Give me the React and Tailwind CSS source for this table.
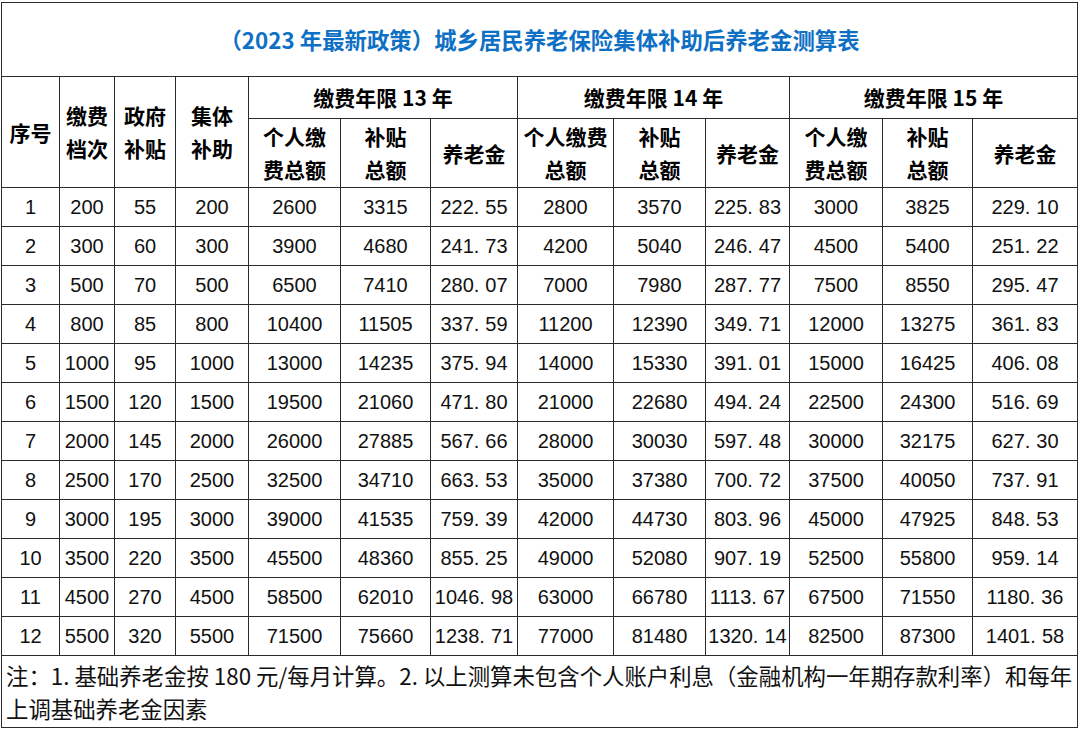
import React from 'react';

const rows = [
  [1, 200, 55, 200, 2600, 3315, '222.55', 2800, 3570, '225.83', 3000, 3825, '229.10'],
  [2, 300, 60, 300, 3900, 4680, '241.73', 4200, 5040, '246.47', 4500, 5400, '251.22'],
  [3, 500, 70, 500, 6500, 7410, '280.07', 7000, 7980, '287.77', 7500, 8550, '295.47'],
  [4, 800, 85, 800, 10400, 11505, '337.59', 11200, 12390, '349.71', 12000, 13275, '361.83'],
  [5, 1000, 95, 1000, 13000, 14235, '375.94', 14000, 15330, '391.01', 15000, 16425, '406.08'],
  [6, 1500, 120, 1500, 19500, 21060, '471.80', 21000, 22680, '494.24', 22500, 24300, '516.69'],
  [7, 2000, 145, 2000, 26000, 27885, '567.66', 28000, 30030, '597.48', 30000, 32175, '627.30'],
  [8, 2500, 170, 2500, 32500, 34710, '663.53', 35000, 37380, '700.72', 37500, 40050, '737.91'],
  [9, 3000, 195, 3000, 39000, 41535, '759.39', 42000, 44730, '803.96', 45000, 47925, '848.53'],
  [10, 3500, 220, 3500, 45500, 48360, '855.25', 49000, 52080, '907.19', 52500, 55800, '959.14'],
  [11, 4500, 270, 4500, 58500, 62010, '1046.98', 63000, 66780, '1113.67', 67500, 71550, '1180.36'],
  [12, 5500, 320, 5500, 71500, 75660, '1238.71', 77000, 81480, '1320.14', 82500, 87300, '1401.58'],
];

const widths = [58, 55, 61, 73, 92, 90, 87, 96, 92, 84, 93, 90, 105];

const cjk = { fontFamily: '"Noto Sans CJK SC", sans-serif' };
const num = { fontFamily: '"Liberation Sans", Arial, sans-serif' };

// decimals in the sheet show a wide dot, like "222. 55"
function Cell({ value }) {
  const s = String(value);
  if (s.includes('.')) {
    const [a, b] = s.split('.');
    return (
      <span>
        {a}.<span className="ml-[6px]">{b}</span>
      </span>
    );
  }
  return <span>{s}</span>;
}

export default function App() {
  const th = 'border border-[#2b2b2b] text-center font-bold text-[21px] leading-[33px] text-black p-0';
  return (
    <div className="w-[1080px] h-[729px] bg-white pt-[2px] pl-[1px]" style={cjk}>
      <table className="table-fixed border-collapse w-[1076px]">
        <colgroup>
          {widths.map((w, i) => (
            <col key={i} style={{ width: w }} />
          ))}
        </colgroup>
        <thead>
          <tr className="h-[74px]">
            <th colSpan={13} className="border border-[#2b2b2b] text-center font-bold text-[22.4px] text-[#0e70c4] p-0">
              （2023 年最新政策）城乡居民养老保险集体补助后养老金测算表
            </th>
          </tr>
          <tr className="h-[42px]">
            <th rowSpan={2} className={th}>序号</th>
            <th rowSpan={2} className={th}>缴费<br />档次</th>
            <th rowSpan={2} className={th}>政府<br />补贴</th>
            <th rowSpan={2} className={th}>集体<br />补助</th>
            <th colSpan={3} className={th}>缴费年限 13 年</th>
            <th colSpan={3} className={th}>缴费年限 14 年</th>
            <th colSpan={3} className={th}>缴费年限 15 年</th>
          </tr>
          <tr className="h-[69px]">
            <th className={th}>个人缴<br />费总额</th>
            <th className={th}>补贴<br />总额</th>
            <th className={th}>养老金</th>
            <th className={th}>个人缴费<br />总额</th>
            <th className={th}>补贴<br />总额</th>
            <th className={th}>养老金</th>
            <th className={th}>个人缴<br />费总额</th>
            <th className={th}>补贴<br />总额</th>
            <th className={th}>养老金</th>
          </tr>
        </thead>
        <tbody>
          {rows.map((r) => (
            <tr key={r[0]} className="h-[39px]">
              {r.map((v, i) => (
                <td
                  key={i}
                  className="border border-[#2b2b2b] text-center text-[20px] text-[#111] p-0 whitespace-nowrap"
                  style={num}
                >
                  <Cell value={v} />
                </td>
              ))}
            </tr>
          ))}
          <tr className="h-[72px]">
            <td colSpan={13} className="border border-[#2b2b2b] text-left text-[22.4px] leading-[33px] text-[#111] pl-[4px] whitespace-nowrap">
              注：1. 基础养老金按 180 元/每月计算。2. 以上测算未包含个人账户利息（金融机构一年期存款利率）和每年
              <br />
              上调基础养老金因素
            </td>
          </tr>
        </tbody>
      </table>
    </div>
  );
}
